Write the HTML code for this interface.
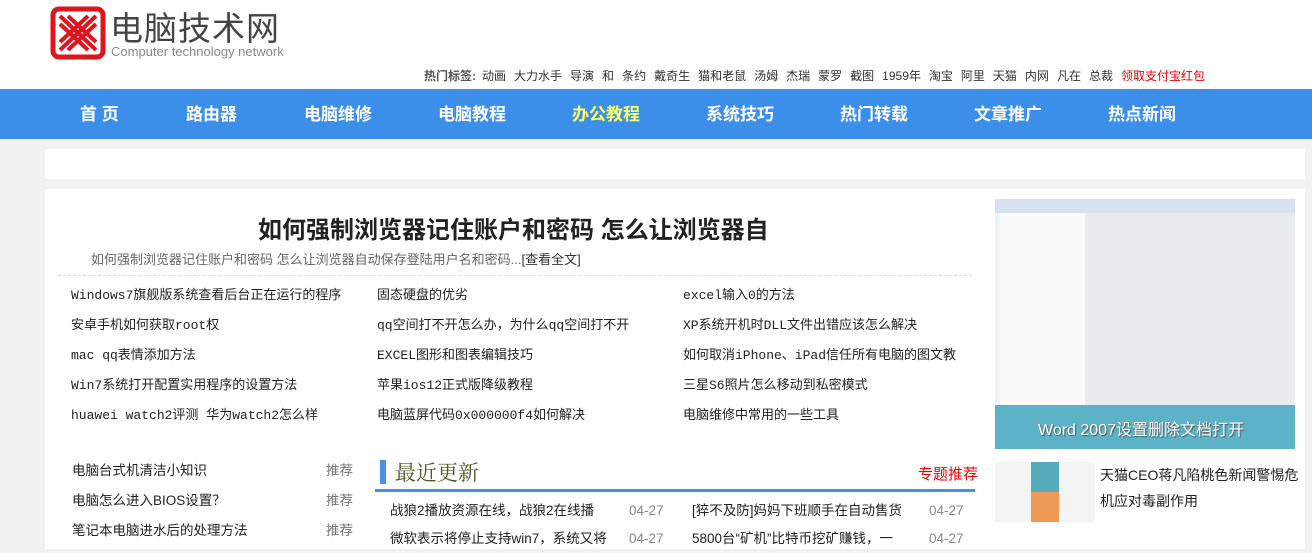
<!DOCTYPE html>
<html><head><meta charset="utf-8"><style>
*{margin:0;padding:0;box-sizing:border-box}
body{width:1312px;height:542px;overflow:hidden;background:#f1f1f1;font-family:"Liberation Sans","Noto Sans CJK SC",sans-serif;color:#333;position:relative}
.a{position:absolute;white-space:nowrap}
.hdr{left:0;top:0;width:1312px;height:89px;background:#fff}
.nav{left:0;top:89px;width:1312px;height:50px;background:#3b8fe8}
.nav span{position:absolute;top:11px;color:#fff;font-size:17px;font-weight:bold}
.tags{top:67px;left:424px;font-size:12px;color:#333;word-spacing:0}
.tags b{color:#555;font-weight:bold;margin-right:6px}
.tags i{font-style:normal;margin-right:8px}
.grid{font-size:13px;color:#222;font-family:"Liberation Mono","Noto Sans CJK SC",monospace}
.li{font-size:13.5px;color:#222}
</style></head><body>
<div class="a hdr"></div>
<svg class="a" style="left:50px;top:6px" width="56" height="54" viewBox="0 0 56 54">
<rect x="3" y="3" width="50" height="48" rx="6" fill="none" stroke="#e0141c" stroke-width="5"/>
<path d="M10 10 L46 44 M46 10 L10 44 M18 10 L46 36 M38 10 L10 36 M10 18 L38 44 M46 18 L18 44" stroke="#e0141c" stroke-width="4" fill="none"/>
</svg>
<div class="a" style="left:110px;top:2px;font-size:33px;color:#444;font-weight:normal;letter-spacing:1px">电脑技术网</div>
<div class="a" style="left:111px;top:44px;font-size:13px;color:#888">Computer technology network</div>
<div class="a tags"><b>热门标签:</b><i>动画</i><i>大力水手</i><i>导演</i><i>和</i><i>条约</i><i>戴奇生</i><i>猫和老鼠</i><i>汤姆</i><i>杰瑞</i><i>蒙罗</i><i>截图</i><i>1959年</i><i>淘宝</i><i>阿里</i><i>天猫</i><i>内网</i><i>凡在</i><i>总裁</i><i style="color:#e00">领取支付宝红包</i></div>
<div class="a nav">
<span style="left:80px">首 页</span><span style="left:186px">路由器</span><span style="left:304px">电脑维修</span><span style="left:438px">电脑教程</span><span style="left:572px;color:#ffff66">办公教程</span><span style="left:706px">系统技巧</span><span style="left:840px">热门转载</span><span style="left:974px">文章推广</span><span style="left:1108px">热点新闻</span>
</div>
<div class="a" style="left:45px;top:149px;width:1260px;height:30px;background:#fff"></div>
<div class="a" style="left:45px;top:189px;width:1260px;height:360px;background:#fff"></div>
<div class="a" style="left:258px;top:210px;font-size:24px;font-weight:bold;color:#222">如何强制浏览器记住账户和密码 怎么让浏览器自</div>
<div class="a" style="left:91px;top:249px;font-size:13px;color:#666">如何强制浏览器记住账户和密码 怎么让浏览器自动保存登陆用户名和密码...<span style="color:#333">[查看全文]</span></div>
<div class="a" style="left:58px;top:275px;width:914px;border-top:1px dashed #ddd"></div>
<div class="a grid" style="left:71px;top:281px;line-height:30px">Windows7旗舰版系统查看后台正在运行的程序<br>安卓手机如何获取root权<br>mac qq表情添加方法<br>Win7系统打开配置实用程序的设置方法<br>huawei watch2评测 华为watch2怎么样</div>
<div class="a grid" style="left:377px;top:281px;line-height:30px">固态硬盘的优劣<br>qq空间打不开怎么办，为什么qq空间打不开<br>EXCEL图形和图表编辑技巧<br>苹果ios12正式版降级教程<br>电脑蓝屏代码0x000000f4如何解决</div>
<div class="a grid" style="left:683px;top:281px;line-height:30px">excel输入0的方法<br>XP系统开机时DLL文件出错应该怎么解决<br>如何取消iPhone、iPad信任所有电脑的图文教<br>三星S6照片怎么移动到私密模式<br>电脑维修中常用的一些工具</div>
<div class="a li" style="left:72px;top:456px;line-height:30px">电脑台式机清洁小知识<br>电脑怎么进入BIOS设置？<br>笔记本电脑进水后的处理方法</div>
<div class="a li" style="left:326px;top:456px;line-height:30px;color:#777">推荐<br>推荐<br>推荐</div>
<div class="a" style="left:380px;top:460px;width:6px;height:24px;background:#4a90e8"></div>
<div class="a" style="left:395px;top:457px;font-size:21px;color:#4a5a20;font-family:'Noto Serif CJK SC',serif">最近更新</div>
<div class="a" style="left:918px;top:463px;font-size:15px;color:#e00">专题推荐</div>
<div class="a" style="left:375px;top:489px;width:600px;height:3px;background:#4a90e8"></div>
<div class="a li" style="left:390px;top:497px;line-height:28px">战狼2播放资源在线，战狼2在线播<br>微软表示将停止支持win7，系统又将</div>
<div class="a li" style="left:629px;top:497px;line-height:28px;color:#888">04-27<br>04-27</div>
<div class="a li" style="left:692px;top:497px;line-height:28px">[猝不及防]妈妈下班顺手在自动售货<br>5800台“矿机”比特币挖矿赚钱，一</div>
<div class="a li" style="left:929px;top:497px;line-height:28px;color:#888">04-27<br>04-27</div>
<div class="a" style="left:995px;top:199px;width:300px;height:250px;background:#eef0f4;overflow:hidden">
<div class="a" style="left:0;top:0;width:300px;height:14px;background:#d6e2f0"></div>
<div class="a" style="left:5px;top:14px;width:85px;height:200px;background:#fafafa"></div>
<div class="a" style="left:90px;top:14px;width:210px;height:200px;background:#e9ebef"></div>
<div class="a" style="left:0;top:206px;width:300px;height:44px;background:#5cb2c6"></div>
<div class="a" style="left:43px;top:217px;font-size:16px;color:#fff;text-shadow:1px 1px 1px #555">Word 2007设置删除文档打开</div>
</div>
<div class="a" style="left:995px;top:462px;width:100px;height:60px;background:#f4f4f4">
<div class="a" style="left:36px;top:0;width:28px;height:60px;background:linear-gradient(#5ab 50%,#e95 50%)"></div>
</div>
<div class="a" style="left:1100px;top:462px;font-size:14px;line-height:26px;color:#222">天猫CEO蒋凡陷桃色新闻警惕危<br>机应对毒副作用</div>
</body></html>
